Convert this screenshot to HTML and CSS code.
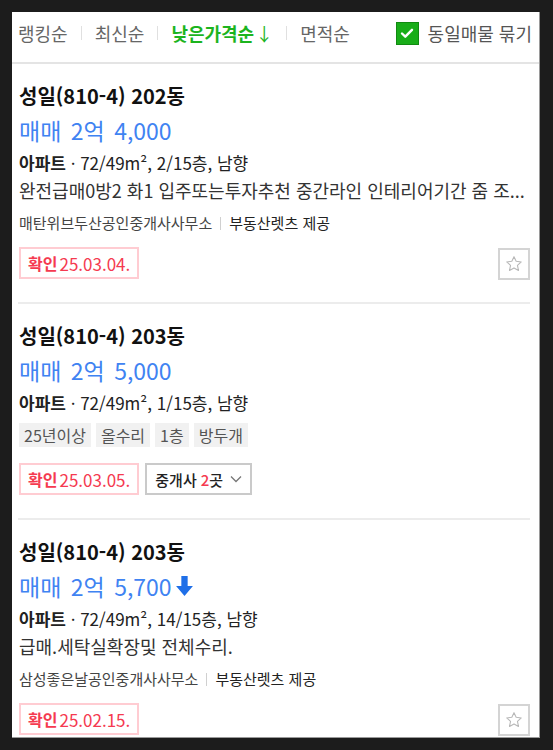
FILE: index.html
```html
<!DOCTYPE html>
<html lang="ko">
<head>
<meta charset="utf-8">
<link rel="stylesheet" href="styles.css">
</head>
<body>
<div class="panel">
  <div class="sortbar">
    <ul class="sorts">
      <li class="sort">랭킹순</li>
      <li class="sep"></li>
      <li class="sort">최신순</li>
      <li class="sep"></li>
      <li class="sort active">낮은가격순<span class="arrow">↓</span></li>
      <li class="sep"></li>
      <li class="sort">면적순</li>
    </ul>
    <label class="group">
      <span class="check"><svg viewBox="0 0 20 20" width="20" height="20"><path d="M5 10.5l3.3 3.2L15 6.8" fill="none" stroke="#fff" stroke-width="2.4" stroke-linecap="round" stroke-linejoin="round"/></svg></span>
      <span class="group-label">동일매물 묶기</span>
    </label>
  </div>

  <div class="item">
    <div class="title">성일(810-4) 202동</div>
    <div class="price">매매 2억 4,000</div>
    <div class="spec"><strong>아파트</strong> · 72/49m², 2/15층, 남향</div>
    <div class="desc">완전급매0방2 화1 입주또는투자추천 중간라인 인테리어기간 줌 조...</div>
    <div class="agent"><span>매탄위브두산공인중개사사무소</span><span class="bar"></span><span class="src">부동산렛츠 제공</span></div>
    <div class="bottom">
      <span class="confirm"><b>확인</b> 25.03.04.</span>
      <button class="star" type="button"><svg viewBox="0 0 24 24" width="20" height="20"><path d="M12 3.2l2.6 5.6 6.1.7-4.55 4.15 1.25 6.05L12 16.7l-5.4 3 1.25-6.05L3.3 9.5l6.1-.7z" fill="none" stroke="#b8b8b8" stroke-width="1.3" stroke-linejoin="round"/></svg></button>
    </div>
  </div>

  <div class="item">
    <div class="title">성일(810-4) 203동</div>
    <div class="price">매매 2억 5,000</div>
    <div class="spec"><strong>아파트</strong> · 72/49m², 1/15층, 남향</div>
    <div class="tags"><span class="tag">25년이상</span><span class="tag">올수리</span><span class="tag">1층</span><span class="tag">방두개</span></div>
    <div class="bottom bottom-tags">
      <div class="left">
        <span class="confirm"><b>확인</b> 25.03.05.</span>
        <button class="agents" type="button">중개사 <em>2</em>곳<svg viewBox="0 0 12 8" width="12" height="8"><path d="M1 1.5l5 5 5-5" fill="none" stroke="#777" stroke-width="1.3"/></svg></button>
      </div>
    </div>
  </div>

  <div class="item">
    <div class="title">성일(810-4) 203동</div>
    <div class="price">매매 2억 5,700<svg class="down" viewBox="0 0 16 19" width="17" height="20"><path d="M5 0h6v9.5h5L8 19 0 9.5h5z" fill="#1f6fe8"/></svg></div>
    <div class="spec"><strong>아파트</strong> · 72/49m², 14/15층, 남향</div>
    <div class="desc">급매.세탁실확장및 전체수리.</div>
    <div class="agent"><span>삼성좋은날공인중개사사무소</span><span class="bar"></span><span class="src">부동산렛츠 제공</span></div>
    <div class="bottom">
      <span class="confirm"><b>확인</b> 25.02.15.</span>
      <button class="star" type="button"><svg viewBox="0 0 24 24" width="20" height="20"><path d="M12 3.2l2.6 5.6 6.1.7-4.55 4.15 1.25 6.05L12 16.7l-5.4 3 1.25-6.05L3.3 9.5l6.1-.7z" fill="none" stroke="#b8b8b8" stroke-width="1.3" stroke-linejoin="round"/></svg></button>
    </div>
  </div>
</div>
</body>
</html>
```

FILE: styles.css
```css
* { box-sizing: border-box; }
html, body { margin: 0; padding: 0; }
body {
  background: #1c1c1c;
  font-family: "Noto Sans CJK KR", "Noto Sans", sans-serif;
  color: #222;
  padding: 12px 0 0 12px;
}
.panel {
  width: 528px;
  height: 726px;
  background: #fff;
  overflow: hidden;
  border-right: 1px solid #9a9a9a;
  border-bottom: 1px solid #9a9a9a;
}
.sortbar {
  display: flex;
  align-items: flex-start;
  height: 52px;
  padding: 8px 7px 0 6px;
  border-bottom: 2px solid #e4e4e4;
}
.sorts {
  display: flex;
  align-items: center;
  list-style: none;
  margin: 0;
  padding: 0;
  height: 26px;
}
.sort {
  font-size: 18px;
  line-height: 26px;
  color: #666;
}
.sort.active {
  color: #1cb41e;
  font-weight: 700;
}
.arrow { font-weight: 400; margin-left: 1px; }
.sep {
  width: 1px;
  height: 14px;
  background: #e0e0e0;
  margin: 0 13px;
}
.group {
  margin-left: auto;
  display: flex;
  align-items: center;
  height: 26px;
}
.check {
  width: 23px;
  height: 23px;
  background: #19ad19;
  border: 1px solid #118a11;
  display: flex;
  align-items: center;
  justify-content: center;
  margin-right: 9px;
}
.group-label {
  font-size: 18px;
  line-height: 26px;
  color: #555;
}

.item {
  margin: 0 9px 0 6px;
  padding: 17px 0 23px 1px;
  border-bottom: 2px solid #ececec;
}
.title {
  font-size: 20px;
  line-height: 30px;
  font-weight: 700;
  color: #111;
}
.price {
  font-size: 23px;
  line-height: 38px;
  color: #3f83f2;
  display: flex;
  align-items: center;
  word-spacing: 3px;
}
.down { margin-left: 4px; }
.spec {
  font-size: 17px;
  line-height: 28px;
  color: #222;
}
.spec strong { font-weight: 700; }
.desc {
  font-size: 18px;
  line-height: 26px;
  color: #333;
  white-space: nowrap;
  overflow: hidden;
  text-overflow: ellipsis;
}
.agent {
  margin-top: 6px;
  font-size: 15px;
  line-height: 28px;
  color: #444;
  display: flex;
  align-items: center;
}
.agent .bar {
  width: 1px;
  height: 13px;
  background: #d0d0d0;
  margin: 0 8px;
}
.agent .src { color: #222; }
.bottom {
  margin-top: 10px;
  display: flex;
  justify-content: space-between;
  align-items: center;
  height: 32px;
}
.bottom-tags { margin-top: 16px; }
.left { display: flex; gap: 6px; height: 32px; }
.confirm {
  display: inline-flex;
  align-items: center;
  height: 32px;
  padding: 0 7px;
  border: 2px solid #ffccd2;
  color: #f53a50;
  font-size: 17px;
}
.confirm b { font-weight: 700; font-size: 16px; margin-right: 2px; }
.star {
  width: 32px;
  height: 32px;
  border: 2px solid #d4d4d4;
  background: #fff;
  padding: 0;
  display: flex;
  align-items: center;
  justify-content: center;
  margin-top: 2px;
}
.tags {
  margin-top: 6px;
  display: flex;
  gap: 5px;
  height: 24px;
}
.tag {
  background: #f1f1f1;
  color: #555;
  font-size: 16px;
  line-height: 24px;
  padding: 0 5px;
}
.agents {
  display: inline-flex;
  align-items: center;
  height: 32px;
  padding: 0 8px;
  border: 2px solid #cacaca;
  background: #fff;
  font-family: inherit;
  font-size: 15px;
  color: #222;
  font-weight: 500;
}
.agents em {
  font-style: normal;
  color: #f53a50;
  margin-left: 4px;
}
.agents svg { margin-left: 7px; }
```
